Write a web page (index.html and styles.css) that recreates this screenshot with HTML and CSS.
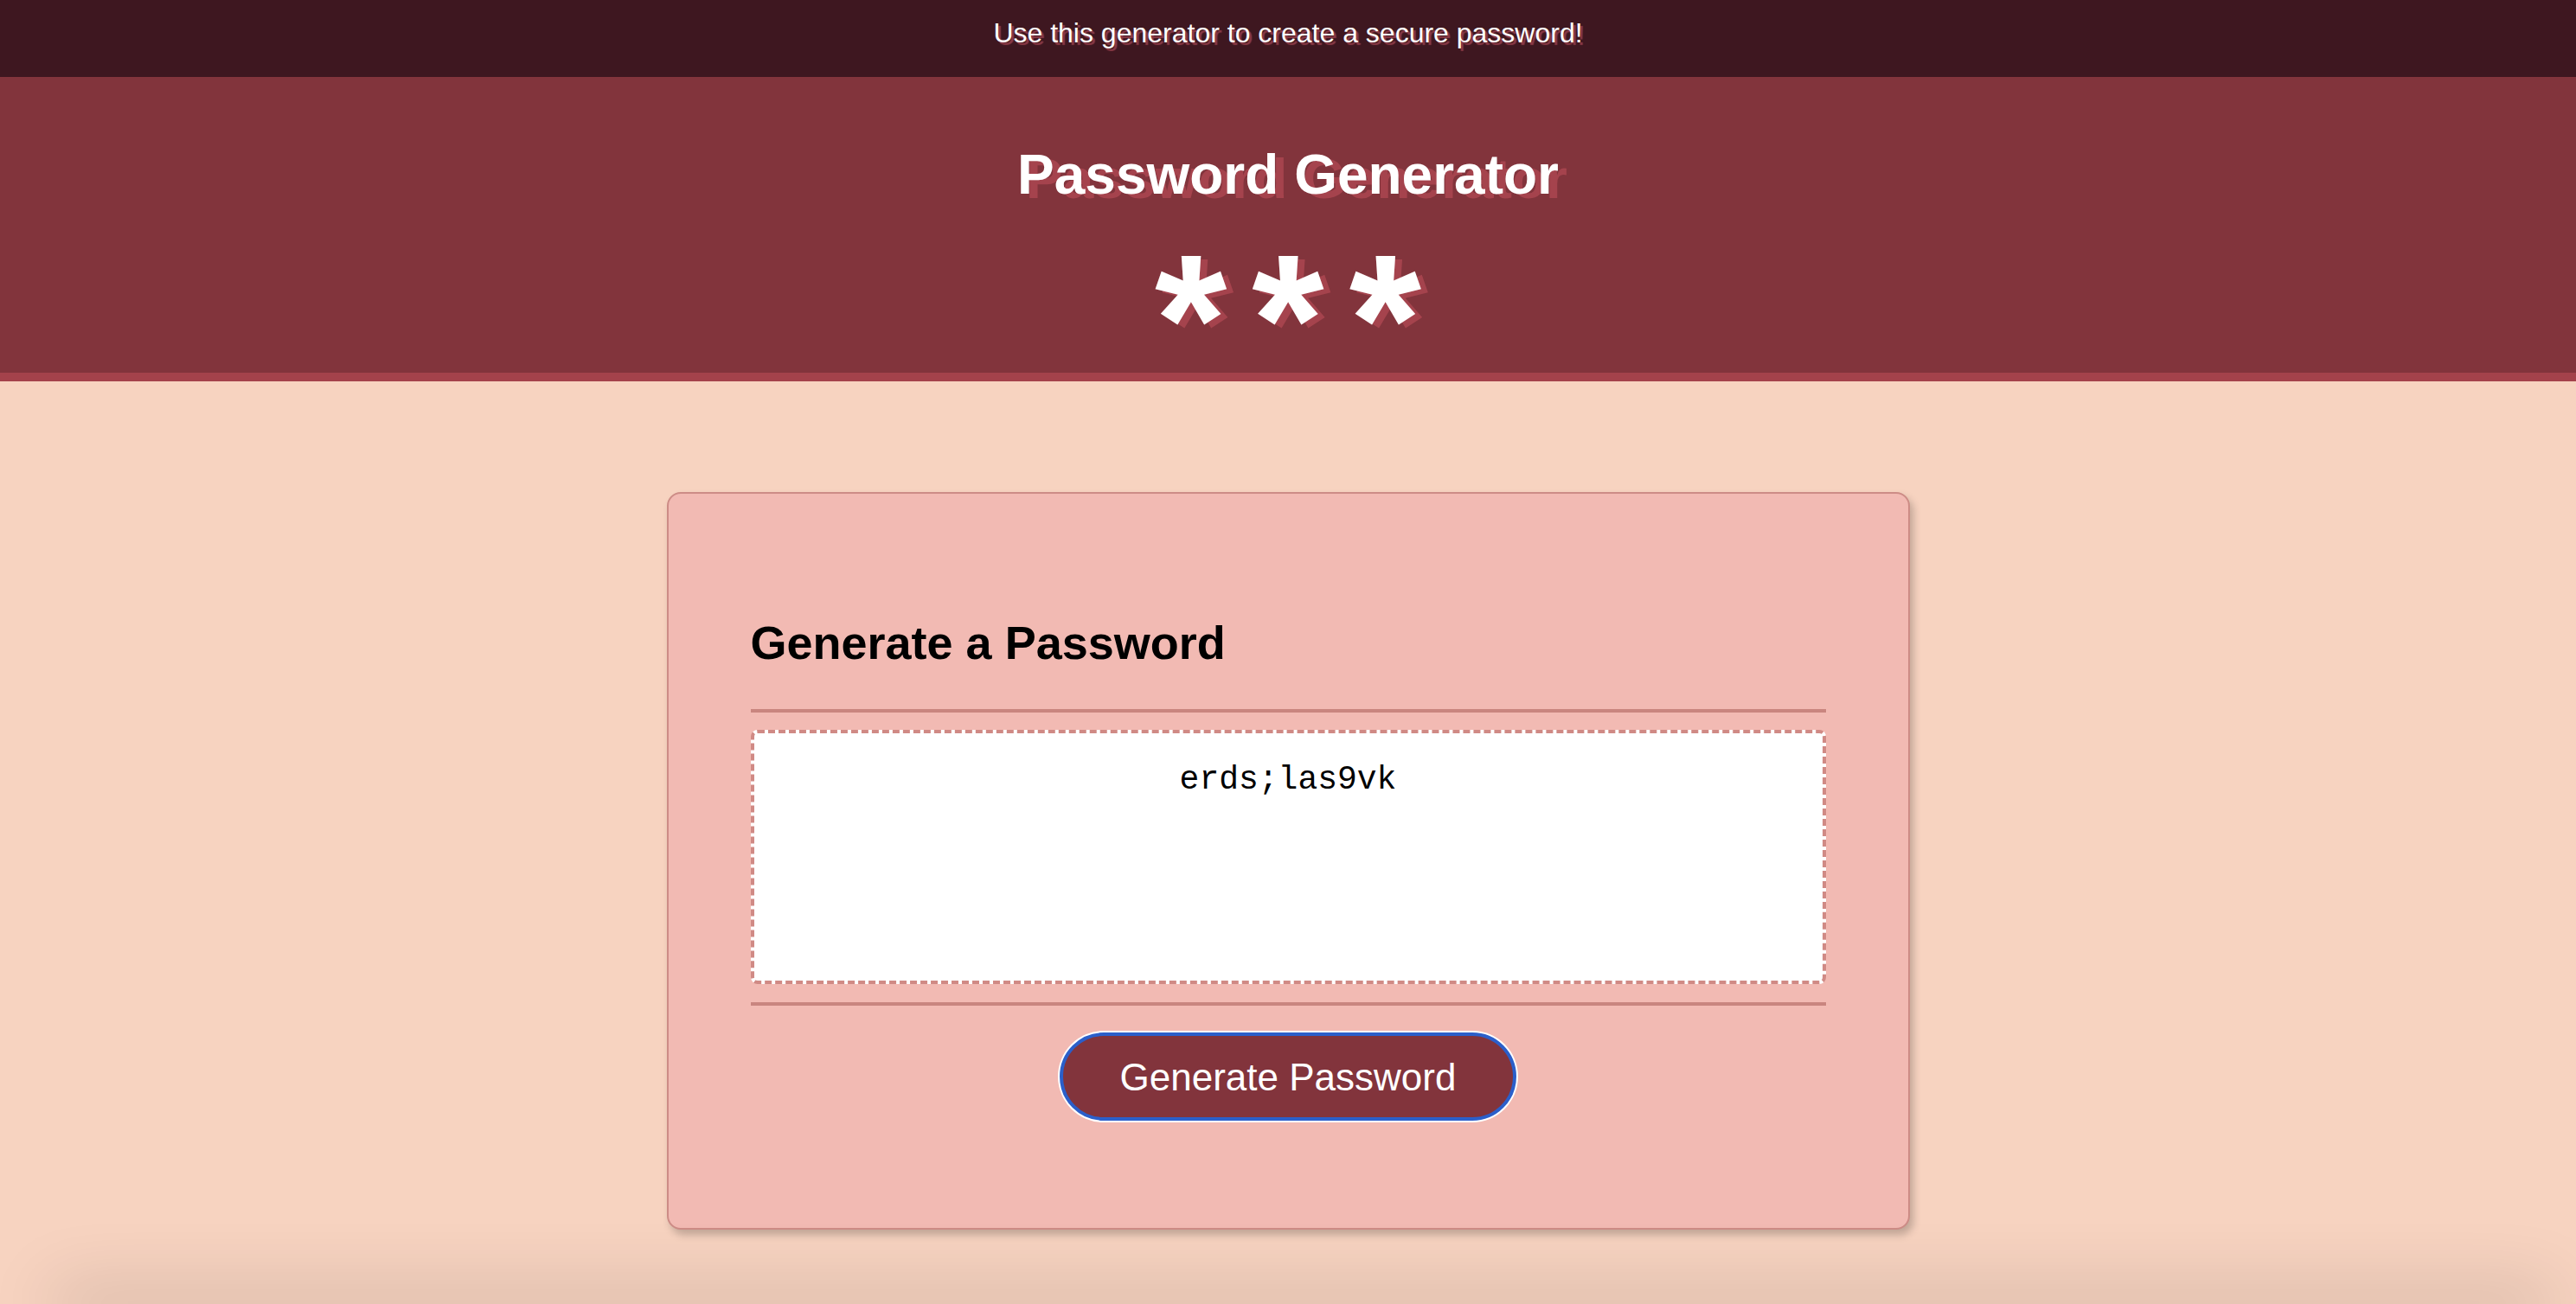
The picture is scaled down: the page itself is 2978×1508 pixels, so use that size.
FILE: index.html
```html
<!DOCTYPE html>
<html lang="en">
<head>
<meta charset="utf-8">
<title>Password Generator</title>
<link rel="stylesheet" href="styles.css">
</head>
<body>
  <div class="topbar">Use this generator to create a secure password!</div>
  <header class="header">
    <h1 class="title">Password Generator</h1>
    <div class="stars">***</div>
  </header>
  <main class="main">
    <section class="card">
      <h2 class="card-title">Generate a Password</h2>
      <hr class="rule">
      <textarea class="output" readonly aria-label="Generated Password">erds;las9vk</textarea>
      <hr class="rule rule-bottom">
      <div class="actions">
        <button class="btn" type="button">Generate Password</button>
      </div>
    </section>
  </main>
  <div class="page-foot"></div>
</body>
</html>
```
FILE: styles.css
```css
html, body {
  margin: 0;
  padding: 0;
}

body {
  min-height: 100vh;
  display: flex;
  flex-direction: column;
  background: #f7d3c0;
  font-family: "Liberation Sans", Helvetica, Arial, sans-serif;
  overflow: hidden;
}

.topbar {
  height: 89px;
  box-sizing: border-box;
  padding-top: 20px;
  background: #3e1720;
  color: #ffffff;
  text-align: center;
  font-size: 32px;
  line-height: 37px;
  text-shadow: 3px 3px 1px #8c3a46;
}

.header {
  background: #82343c;
  border-bottom: 10px solid #a4424b;
  padding-top: 76px;
  text-align: center;
  color: #ffffff;
}

.title {
  margin: 0 0 68px;
  font-size: 64px;
  line-height: 74px;
  font-weight: bold;
  text-shadow: 10px 5px 0 #a5434d;
}

.stars {
  font-size: 214px;
  line-height: 124px;
  height: 124px;
  font-weight: bold;
  letter-spacing: 29px;
  text-indent: 29px;
  text-shadow: 8px 4px 0 #a5434d;
}

.main {
  padding-top: 128px;
}

.card {
  width: 1437px;
  box-sizing: border-box;
  margin: 0 auto;
  padding: 95px;
  background: #f2bab3;
  border: 2px solid #cd8c86;
  border-radius: 16px;
  box-shadow: 4px 6px 10px rgba(0, 0, 0, 0.22);
}

.card-title {
  margin: 46px 0 46px;
  font-size: 54px;
  line-height: 62px;
  font-weight: bold;
  color: #000000;
}

.rule {
  border: 0;
  height: 4px;
  margin: 0 0 20px;
  background: #c9857f;
}

.rule-bottom {
  margin: 21px 0 31px;
}

.output {
  display: block;
  width: 100%;
  height: 294px;
  box-sizing: border-box;
  margin: 0;
  padding: 31px 20px;
  border: 4px dashed #d08a85;
  border-radius: 8px;
  background: #ffffff;
  font-family: "Liberation Mono", "Courier New", monospace;
  font-size: 38px;
  line-height: 45px;
  color: #000000;
  text-align: center;
  resize: none;
  overflow: hidden;
  outline: none;
}

.actions {
  display: flex;
  justify-content: center;
  margin-bottom: 29px;
}

.btn {
  width: 528px;
  height: 102px;
  box-sizing: border-box;
  border: 4px solid #2b5fca;
  border-radius: 60px;
  background: #82343c;
  color: #ffffff;
  font-family: "Liberation Sans", Helvetica, Arial, sans-serif;
  font-size: 44px;
  line-height: 49px;
  box-shadow: 0 0 0 2px #ffffff;
  cursor: pointer;
}

.page-foot {
  margin: auto 40px 0 76px;
  height: 0;
  box-shadow: 0 0 80px 16px rgba(0, 0, 0, 0.2);
}
```
